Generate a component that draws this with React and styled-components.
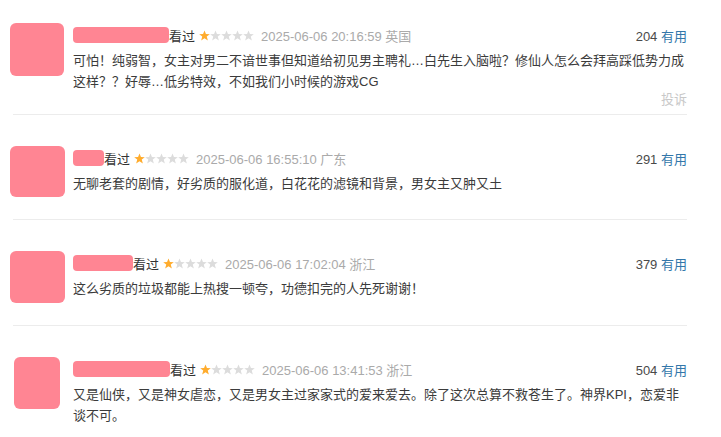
import React from "react";
import styled, { createGlobalStyle } from "styled-components";

const GlobalStyle = createGlobalStyle`
  body {
    margin: 0;
    background: #fff;
    font-family: "Liberation Sans", Arial, "Noto Sans CJK SC", sans-serif;
  }
`;

const reviews = [
  {
    id: 1,
    nameWidth: 96,
    avatar: { w: 54, h: 53 },
    time: "2025-06-06 20:16:59",
    location: "英国",
    votes: 204,
    text: "可怕！纯弱智，女主对男二不谙世事但知道给初见男主聘礼…白先生入脑啦？修仙人怎么会拜高踩低势力成这样？？好辱…低劣特效，不如我们小时候的游戏CG",
    report: true,
  },
  {
    id: 2,
    nameWidth: 31,
    avatar: { w: 55, h: 51 },
    time: "2025-06-06 16:55:10",
    location: "广东",
    votes: 291,
    text: "无聊老套的剧情，好劣质的服化道，白花花的滤镜和背景，男女主又肿又土",
  },
  {
    id: 3,
    nameWidth: 60,
    avatar: { w: 55, h: 52 },
    time: "2025-06-06 17:02:04",
    location: "浙江",
    votes: 379,
    text: "这么劣质的垃圾都能上热搜一顿夸，功德扣完的人先死谢谢！",
  },
  {
    id: 4,
    nameWidth: 97,
    avatar: { w: 46, h: 52 },
    time: "2025-06-06 13:41:53",
    location: "浙江",
    votes: 504,
    text: "又是仙侠，又是神女虐恋，又是男女主过家家式的爱来爱去。除了这次总算不救苍生了。神界KPI，恋爱非谈不可。",
  },
];

const Page = styled.div`
  padding: 0 34px 0 9px;
  font-size: 13px;
  color: #494949;
`;

const Item = styled.div`
  position: relative;
  display: flex;
  align-items: flex-start;
  padding: 31px 0 22px;

  &:first-child {
    padding-top: 23px;
  }
`;

const Divider = styled.div`
  height: 1px;
  margin-left: 4px;
  background: #ececec;
`;

const AvatarSlot = styled.div`
  width: 56px;
  flex: none;
  display: flex;
  justify-content: center;
`;

const Avatar = styled.div`
  width: ${(p) => p.$w}px;
  height: ${(p) => p.$h}px;
  border-radius: 6px;
  background: #ff8593;
`;

const Body = styled.div`
  flex: 1;
  min-width: 0;
  margin-left: 8px;
`;

const Header = styled.div`
  display: flex;
  align-items: center;
  height: 22px;
  margin-top: 1px;
  white-space: nowrap;
`;

const NameMask = styled.span`
  display: inline-block;
  width: ${(p) => p.$w}px;
  height: 16px;
  border-radius: 4px;
  background: #ff8593;
`;

const Status = styled.span`
  color: #333;
`;

const Stars = styled.span`
  display: inline-flex;
  margin: 0 7px 0 4px;
`;

const Meta = styled.span`
  color: #aaa;
`;

const Votes = styled.span`
  margin-left: auto;
  color: #494949;

  a {
    color: #3377aa;
    text-decoration: none;
  }
`;

const Comment = styled.p`
  margin: 4px 0 0;
  line-height: 21px;
  color: #3b3b3b;
`;

const Report = styled.a`
  position: absolute;
  right: 0;
  bottom: 5px;
  color: #c8c8c8;
  line-height: 18px;
`;

const StarIcon = ({ on }) => (
  <svg width="11" height="11" viewBox="0 0 11 11">
    <path
      d="M5.5 0.4 L6.95 4.05 L10.8 4.2 L7.75 6.6 L8.85 10.5 L5.5 8.25 L2.15 10.5 L3.25 6.6 L0.2 4.2 L4.05 4.05 Z"
      fill={on ? "#ffac2d" : "#dcdcdc"}
    />
  </svg>
);

const Rating = ({ value }) => (
  <Stars>
    {[1, 2, 3, 4, 5].map((i) => (
      <StarIcon key={i} on={i <= value} />
    ))}
  </Stars>
);

export default function App() {
  return (
    <>
      <GlobalStyle />
      <Page>
        {reviews.map((r, idx) => (
          <React.Fragment key={r.id}>
            {idx > 0 && <Divider />}
            <Item>
              <AvatarSlot>
                <Avatar $w={r.avatar.w} $h={r.avatar.h} />
              </AvatarSlot>
              <Body>
                <Header>
                  <NameMask $w={r.nameWidth} />
                  <Status>看过</Status>
                  <Rating value={1} />
                  <Meta>
                    {r.time} {r.location}
                  </Meta>
                  <Votes>
                    {r.votes} <a href="#">有用</a>
                  </Votes>
                </Header>
                <Comment>{r.text}</Comment>
              </Body>
              {r.report && <Report>投诉</Report>}
            </Item>
          </React.Fragment>
        ))}
        <Divider />
      </Page>
    </>
  );
}
